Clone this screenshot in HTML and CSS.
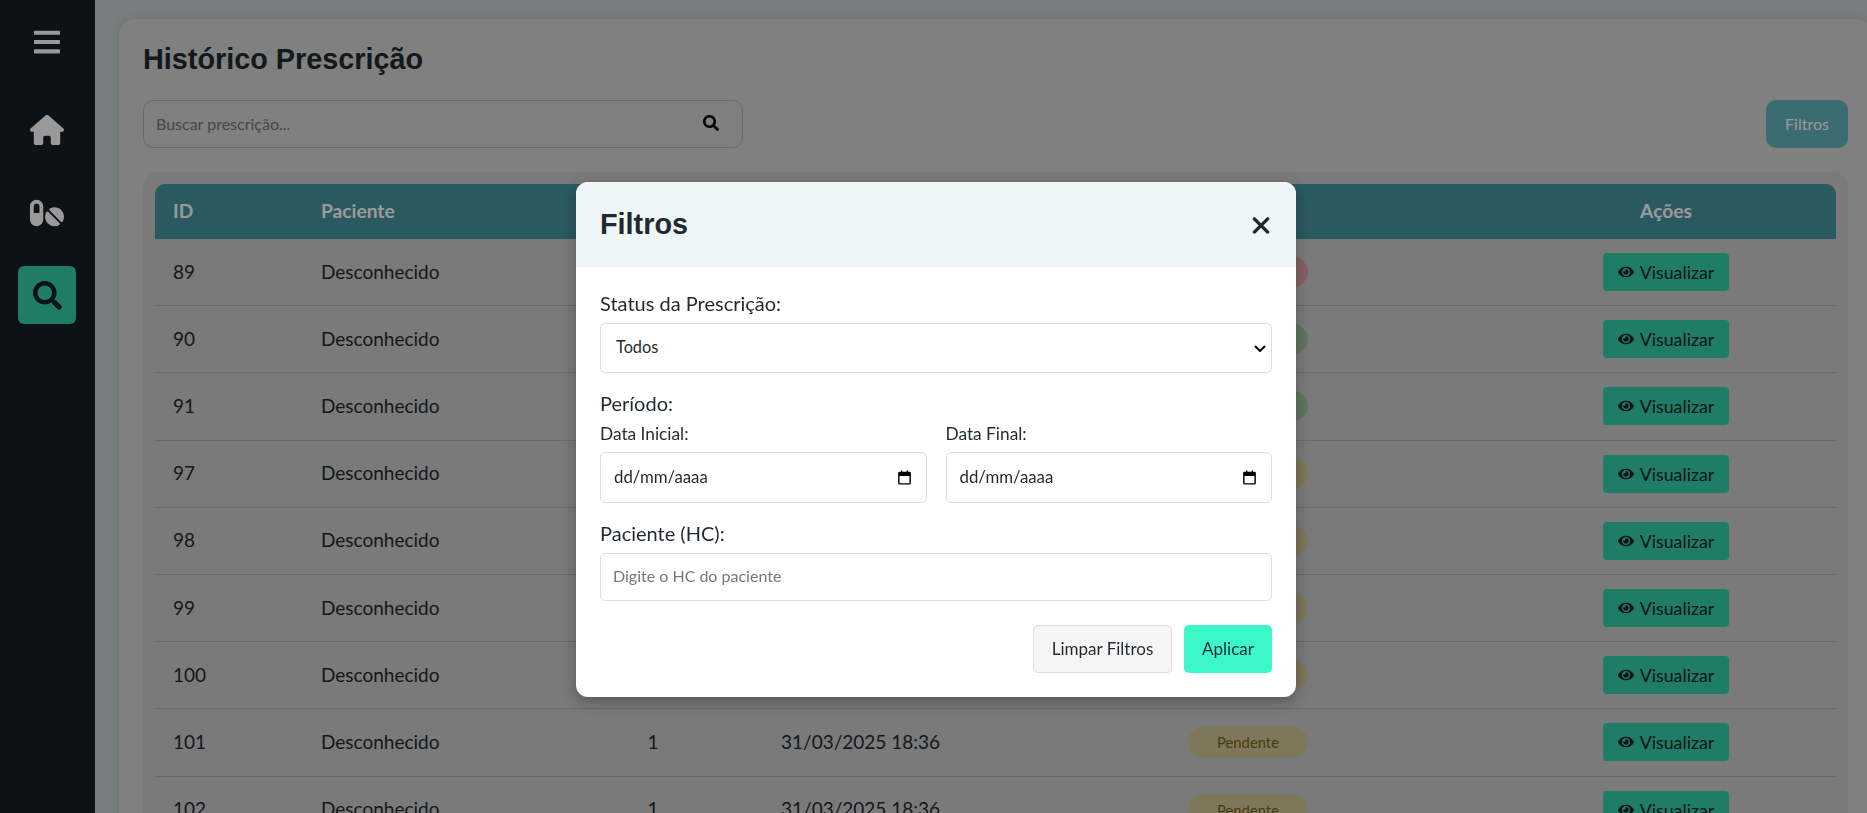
FILE: index.html
```html
<!DOCTYPE html>
<html lang="pt-BR">
<head>
  <meta charset="UTF-8" />
  <title>Histórico Prescrição</title>
  <link rel="stylesheet" href="styles.css">
</head>
<body>
  <nav class="sidebar">
    <svg class="nav-bars" viewBox="0 0 448 512"><path d="M16 132h416c8.837 0 16-7.163 16-16V76c0-8.837-7.163-16-16-16H16C7.163 60 0 67.163 0 76v40c0 8.837 7.163 16 16 16zm0 160h416c8.837 0 16-7.163 16-16v-40c0-8.837-7.163-16-16-16H16c-8.837 0-16 7.163-16 16v40c0 8.837 7.163 16 16 16zm0 160h416c8.837 0 16-7.163 16-16v-40c0-8.837-7.163-16-16-16H16c-8.837 0-16 7.163-16 16v40c0 8.837 7.163 16 16 16z"/></svg>
    <a class="nav-item"><svg class="nav-icon" viewBox="0 0 576 512"><path d="M575.8 255.5c0 18-15 32.1-32 32.1h-32l.7 160.2c0 2.7-.2 5.4-.5 8.1V472c0 22.1-17.9 40-40 40H456c-1.1 0-2.2 0-3.3-.1c-1.4 .1-2.8 .1-4.2 .1H416 392c-22.1 0-40-17.9-40-40V448 384c0-17.7-14.3-32-32-32H256c-17.7 0-32 14.3-32 32v64 24c0 22.1-17.9 40-40 40H160 128.1c-1.5 0-3-.1-4.5-.2c-1.2 .1-2.4 .2-3.6 .2H104c-22.1 0-40-17.9-40-40V360c0-.9 0-1.9 .1-2.8V287.6H32c-18 0-32-14-32-32.1c0-9 3-17 10-24L266.4 8c7-7 15-8 22-8s15 2 21 7L564.8 231.5c8 7 12 15 11 24z"/></svg></a>
    <a class="nav-item"><svg class="nav-icon" viewBox="0 0 576 512"><path fill-rule="evenodd" d="M112 96c-26.5 0-48 21.5-48 48V256h96V144c0-26.5-21.5-48-48-48zM0 144C0 82.1 50.1 32 112 32s112 50.1 112 112V368c0 61.9-50.1 112-112 112S0 429.9 0 368V144zM554.9 399.4c-7.1 12.3-23.7 13.1-33.8 3.1L333.5 214.9c-10-10-9.3-26.7 3.1-33.8C360 167.7 387.1 160 416 160c88.4 0 160 71.6 160 160c0 28.9-7.7 56-21.1 79.4zm-59.5 59.5C472 472.3 444.9 480 416 480c-88.4 0-160-71.6-160-160c0-28.9 7.7-56 21.1-79.4c7.1-12.3 23.7-13.1 33.8-3.1L498.5 425.1c10 10 9.3 26.7-3.1 33.8z"/></svg></a>
    <a class="nav-item active"><svg class="nav-icon" viewBox="0 0 512 512"><path d="M505 442.7L405.3 343c-4.5-4.5-10.6-7-17-7H372c27.6-35.3 44-79.7 44-128C416 93.1 322.9 0 208 0S0 93.1 0 208s93.1 208 208 208c48.3 0 92.7-16.4 128-44v16.3c0 6.4 2.5 12.5 7 17l99.7 99.7c9.4 9.4 24.6 9.4 33.9 0l28.3-28.3c9.4-9.4 9.4-24.6.1-34zM208 336c-70.7 0-128-57.2-128-128 0-70.7 57.2-128 128-128 70.7 0 128 57.2 128 128 0 70.7-57.2 128-128 128z"/></svg></a>
  </nav>

  <main class="main">
    <section class="card">
      <h1 class="page-title">Histórico Prescrição</h1>

      <div class="toolbar">
        <div class="search">
          <input class="search-input" type="text" placeholder="Buscar prescrição..." />
          <svg class="search-icon" viewBox="0 0 512 512"><path d="M505 442.7L405.3 343c-4.5-4.5-10.6-7-17-7H372c27.6-35.3 44-79.7 44-128C416 93.1 322.9 0 208 0S0 93.1 0 208s93.1 208 208 208c48.3 0 92.7-16.4 128-44v16.3c0 6.4 2.5 12.5 7 17l99.7 99.7c9.4 9.4 24.6 9.4 33.9 0l28.3-28.3c9.4-9.4 9.4-24.6.1-34zM208 336c-70.7 0-128-57.2-128-128 0-70.7 57.2-128 128-128 70.7 0 128 57.2 128 128 0 70.7-57.2 128-128 128z"/></svg>
        </div>
        <button class="filter-btn">Filtros</button>
      </div>

      <div class="table-wrap">
        <table class="table">
          <thead>
            <tr>
              <th class="col-id">ID</th>
              <th class="col-patient">Paciente</th>
              <th class="col-qty">Itens</th>
              <th class="col-date">Data</th>
              <th class="col-status">Status</th>
              <th class="col-actions">Ações</th>
            </tr>
          </thead>
          <tbody id="rows"></tbody>
        </table>
      </div>
    </section>
  </main>

  <div class="overlay"></div>

  <div class="modal-layer">
    <div class="modal">
      <header class="modal-header">
        <h2 class="modal-title">Filtros</h2>
        <svg class="modal-close" viewBox="0 0 384 512"><path d="M342.6 150.6c12.5-12.5 12.5-32.8 0-45.3s-32.8-12.5-45.3 0L192 210.7 86.6 105.4c-12.5-12.5-32.8-12.5-45.3 0s-12.5 32.8 0 45.3L146.7 256 41.4 361.4c-12.5 12.5-12.5 32.8 0 45.3s32.8 12.5 45.3 0L192 301.3 297.4 406.6c12.5 12.5 32.8 12.5 45.3 0s12.5-32.8 0-45.3L237.3 256 342.6 150.6z"/></svg>
      </header>
      <div class="modal-body">
        <label class="label" for="statusSelect">Status da Prescrição:</label>
        <div class="select-wrap">
          <select class="select" id="statusSelect">
            <option>Todos</option>
          </select>
          <svg class="chevron" viewBox="0 0 12 7"><path d="M1 1l5 5 5-5"/></svg>
        </div>

        <div class="label label-period">Período:</div>
        <div class="date-row">
          <div class="date-col">
            <div class="label-small">Data Inicial:</div>
            <div class="date-input">
              <span class="date-text">dd/mm/aaaa</span>
              <svg class="calendar" viewBox="0 0 24 24"><path d="M7 2v2H5a2 2 0 0 0-2 2v14a2 2 0 0 0 2 2h14a2 2 0 0 0 2-2V6a2 2 0 0 0-2-2h-2V2h-2v2H9V2H7zM5 10h14v10H5V10z"/></svg>
            </div>
          </div>
          <div class="date-col">
            <div class="label-small">Data Final:</div>
            <div class="date-input">
              <span class="date-text">dd/mm/aaaa</span>
              <svg class="calendar" viewBox="0 0 24 24"><path d="M7 2v2H5a2 2 0 0 0-2 2v14a2 2 0 0 0 2 2h14a2 2 0 0 0 2-2V6a2 2 0 0 0-2-2h-2V2h-2v2H9V2H7zM5 10h14v10H5V10z"/></svg>
            </div>
          </div>
        </div>

        <label class="label label-hc" for="hcInput">Paciente (HC):</label>
        <input class="text-input" id="hcInput" type="text" placeholder="Digite o HC do paciente" />

        <div class="modal-actions">
          <button class="btn-clear">Limpar Filtros</button>
          <button class="btn-apply">Aplicar</button>
        </div>
      </div>
    </div>
  </div>

  <script>
    const rows = [
      [89, 'Recusada', 'red'],
      [90, 'Aprovada', 'green'],
      [91, 'Aprovada', 'green'],
      [97, 'Pendente', 'yellow'],
      [98, 'Pendente', 'yellow'],
      [99, 'Pendente', 'yellow'],
      [100, 'Pendente', 'yellow'],
      [101, 'Pendente', 'yellow'],
      [102, 'Pendente', 'yellow'],
    ];
    const eye = '<svg class="eye" viewBox="0 0 576 512"><path d="M572.52 241.4C518.29 135.59 410.93 64 288 64S57.68 135.64 3.48 241.41a32.35 32.35 0 0 0 0 29.19C57.71 376.41 165.07 448 288 448s230.32-71.64 284.52-177.41a32.35 32.35 0 0 0 0-29.19zM288 400a144 144 0 1 1 144-144 143.93 143.93 0 0 1-144 144zm0-240a95.31 95.31 0 0 0-25.31 3.79 47.85 47.85 0 0 1-66.9 66.9A95.78 95.78 0 1 0 288 160z"/></svg>';
    document.getElementById('rows').innerHTML = rows.map(r => `
      <tr>
        <td>${r[0]}</td>
        <td>Desconhecido</td>
        <td class="col-qty">1</td>
        <td>31/03/2025 18:36</td>
        <td class="col-status"><span class="badge ${r[2]}">${r[1]}</span></td>
        <td class="col-actions"><button class="view-btn">${eye}Visualizar</button></td>
      </tr>`).join('');
  </script>
</body>
</html>
```

FILE: styles.css
```css
* {
  box-sizing: border-box;
}
html, body {
  height: 100%;
  margin: 0;
  overflow: hidden;
}
body {
  display: flex;
  background: #c8d0d2;
  color: #1f2a30;
  font-family: Lato, "Noto Sans", sans-serif;
}
input, select, button {
  font-family: inherit;
}

/* sidebar */
.sidebar {
  flex: none;
  width: 95px;
  height: 100%;
  background: #161f27;
  display: flex;
  flex-direction: column;
  align-items: center;
  padding: 27px 1px 0 0;
}
.nav-bars {
  width: 26px;
  height: 30px;
  fill: #fff;
  margin-bottom: 44px;
}
.nav-item {
  width: 58px;
  height: 58px;
  margin-bottom: 24.5px;
  border-radius: 6px;
  display: flex;
  align-items: center;
  justify-content: center;
}
.nav-icon {
  width: 34px;
  height: 34px;
  fill: #fff;
}
.nav-item.active {
  background: #34cfaa;
}
.nav-item.active .nav-icon {
  width: 29px;
  height: 29px;
  fill: #161f27;
}

/* page */
.main {
  flex: 1;
  min-width: 0;
  padding: 19px 0 0 24px;
}
.card {
  margin-right: -5px;
  background: #d5d5d5;
  border-radius: 16px;
  padding: 24px;
  box-shadow: 0 0 10px rgba(0, 0, 0, 0.1);
  height: 900px;
}
.page-title {
  margin: 0 0 24px;
  font-family: "Liberation Sans", Arial, sans-serif;
  font-size: 28.8px;
  font-weight: 700;
  line-height: 33px;
  color: #1f2a30;
}
.toolbar {
  display: flex;
  justify-content: space-between;
  margin-bottom: 24px;
}
.search {
  width: 600px;
  height: 48px;
  position: relative;
}
.search-input {
  width: 100%;
  height: 100%;
  background: transparent;
  border: 1px solid #b0b0b0;
  border-radius: 10px;
  padding: 0 12px 2px;
  font-size: 16px;
}
.search-input::placeholder {
  color: #777;
}
.search-icon {
  position: absolute;
  top: 15px;
  right: 24px;
  width: 16px;
  height: 16px;
  fill: #000;
}
.filter-btn {
  width: 82px;
  height: 48px;
  padding-bottom: 2px;
  background: #62b4be;
  border: none;
  border-radius: 10px;
  color: #fff;
  font-size: 16px;
}

/* table */
.table-wrap {
  background: #cbcbcb;
  border-radius: 16px;
  padding: 12px;
}
.table {
  width: 100%;
  border-collapse: separate;
  border-spacing: 0;
  table-layout: fixed;
}
.table th {
  background: #4696a0;
  color: #fff;
  font-size: 19.2px;
  font-weight: 700;
  text-align: left;
  height: 55px;
  padding: 0 18px 3px;
}
.table th:first-child {
  border-top-left-radius: 10px;
}
.table th:last-child {
  border-top-right-radius: 10px;
}
.table td {
  height: 67.2px;
  padding: 0 18px 2px;
  font-size: 19px;
  border-bottom: 1px solid #b0b0b0;
}
.table td.col-status, .table td.col-actions {
  padding-bottom: 0;
}
.col-id { width: 148px; }
.col-patient { width: 240px; }
.col-qty { width: 220px; }
.col-date { width: 237px; }
.col-status { width: 496px; }
.table .col-qty, .table .col-status, .table .col-actions {
  text-align: center;
}
.badge {
  display: inline-block;
  width: 120px;
  height: 30px;
  line-height: 30px;
  border-radius: 15px;
  font-size: 14.8px;
  vertical-align: middle;
}
.badge.yellow { background: #d4c694; color: #7a6420; }
.badge.green { background: #9fc49f; color: #1b5e20; }
.badge.red { background: #d9a5a5; color: #8b1c1c; }
.view-btn {
  display: inline-flex;
  align-items: center;
  justify-content: center;
  gap: 6px;
  width: 126px;
  height: 38px;
  background: #34cfaa;
  border: none;
  border-radius: 4px;
  color: #161f27;
  font-size: 17.8px;
  vertical-align: middle;
}
.eye {
  width: 16px;
  height: 16px;
  fill: #161f27;
}

/* modal */
.overlay {
  position: fixed;
  inset: 0;
  background: rgba(0, 0, 0, 0.4);
}
.modal-layer {
  position: fixed;
  top: 182px;
  left: 0;
  right: -5px;
  display: flex;
  justify-content: center;
}
.modal {
  width: 720px;
  background: #fff;
  border-radius: 12px;
  overflow: hidden;
  box-shadow: 0 5px 15px rgba(0, 0, 0, 0.3);
}
.modal-header {
  height: 85px;
  background: #eef6f8;
  padding: 0 25px 0 24px;
  display: flex;
  align-items: center;
  justify-content: space-between;
}
.modal-title {
  margin: 0;
  font-family: "Liberation Sans", Arial, sans-serif;
  font-size: 28.8px;
  font-weight: 700;
  color: #1f2a30;
}
.modal-close {
  width: 20px;
  height: 27px;
  margin-top: 1px;
  fill: #1f2a30;
}
.modal-body {
  padding: 24px;
}
.label {
  display: block;
  font-size: 20px;
  line-height: 24px;
  margin-bottom: 8px;
}
.label-period {
  margin: 18px 0 8px;
}
.label-hc {
  margin-top: 18px;
}
.label-small {
  font-size: 17.3px;
  line-height: 22px;
  margin-bottom: 7px;
}
.select, .text-input, .date-input {
  width: 100%;
  background: #fff;
  border: 1px solid #ddd;
  border-radius: 5px;
  font-size: 16px;
  color: #1f2a30;
}
.select-wrap {
  position: relative;
}
.select {
  display: block;
  appearance: none;
  height: 50px;
  padding: 0 15px 4px;
  font-size: 16.3px;
}
.chevron {
  position: absolute;
  top: 22px;
  right: 6px;
  width: 12px;
  height: 7px;
  fill: none;
  stroke: #000;
  stroke-width: 2;
  pointer-events: none;
}
.date-row {
  display: flex;
  gap: 19px;
}
.date-col {
  flex: 1;
}
.date-input {
  height: 51px;
  padding: 0 13px;
  display: flex;
  align-items: center;
  justify-content: space-between;
}
.date-text {
  font-size: 16.8px;
  padding-bottom: 3px;
}
.calendar {
  width: 17px;
  height: 17px;
}
.text-input {
  height: 48px;
  padding: 0 12px 4px;
}
.text-input::placeholder {
  color: #777;
}
.modal-actions {
  display: flex;
  justify-content: flex-end;
  gap: 12px;
  margin-top: 24px;
}
.btn-clear, .btn-apply {
  height: 48px;
  padding: 0 0 2px;
  border-radius: 5px;
  font-size: 17px;
  color: #1f2a30;
}
.btn-clear {
  width: 139px;
  background: #f5f5f5;
  border: 1px solid #ddd;
}
.btn-apply {
  width: 88px;
  background: #3cf8c9;
  border: none;
}
```
